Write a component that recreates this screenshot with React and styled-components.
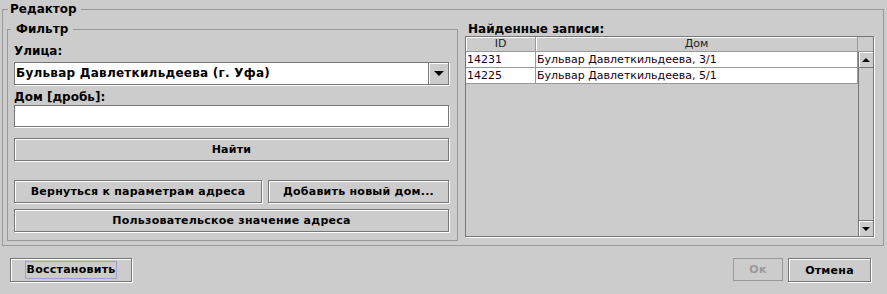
import React from 'react';
import styled, { createGlobalStyle } from 'styled-components';

const GlobalStyle = createGlobalStyle`
  html, body {
    margin: 0;
    padding: 0;
    background: #cccccc;
  }
  body {
    font-family: "DejaVu Sans", "Liberation Sans", sans-serif;
    font-size: 12px;
    color: #000;
  }
`;

const Window = styled.div`
  width: 887px;
  height: 294px;
  box-sizing: border-box;
  padding-top: 2px;
  display: flex;
  flex-direction: column;
  background: #cccccc;
`;

const Group = styled.fieldset`
  margin: 0;
  min-width: 0;
  border: 1px solid #999999;
  box-sizing: border-box;
`;

const Editor = styled(Group)`
  margin-left: 2px;
  width: 882px;
  padding: 6px 8px 4px 4px;
  display: flex;
  gap: 7px;
`;

const Filter = styled(Group)`
  width: 451px;
  height: 219px;
  padding: 0 8px 0 6px;
  display: flex;
  flex-direction: column;
`;

const Legend = styled.legend`
  font-weight: bold;
  line-height: 14px;
  height: 14px;
  padding: ${(p) => p.$pad};
  margin-left: ${(p) => p.$shift};
`;

const Label = styled.div`
  font-weight: bold;
  line-height: 14px;
  height: 14px;
  margin-top: ${(p) => p.$top || '0px'};
  margin-bottom: ${(p) => p.$bottom || '0px'};
`;

const Combo = styled.div`
  height: 23px;
  box-sizing: border-box;
  display: flex;
  border: 1px solid #777777;
  box-shadow: 1px 1px 0 #ffffff;
  background: #ffffff;
`;

const ComboText = styled.div`
  flex: 1;
  font-weight: bold;
  letter-spacing: 0.25px;
  padding-left: 1px;
  line-height: 21px;
`;

const ComboArrow = styled.div`
  width: 20px;
  box-sizing: border-box;
  background: #cccccc;
  border-left: 1px solid #777777;
  box-shadow: inset 1px 1px 0 #ffffff;
  display: flex;
  align-items: center;
  justify-content: center;
`;

const Triangle = styled.div`
  width: 0;
  height: 0;
  border-left: ${(p) => p.$size}px solid transparent;
  border-right: ${(p) => p.$size}px solid transparent;
  ${(p) => (p.$up ? 'border-bottom' : 'border-top')}: ${(p) => p.$size}px solid #000;
`;

const Field = styled.div`
  height: 22px;
  box-sizing: border-box;
  border: 1px solid #777777;
  box-shadow: 1px 1px 0 #ffffff;
  background: #ffffff;
`;

const Button = styled.button`
  height: ${(p) => p.$h || 23}px;
  width: ${(p) => (p.$w ? `${p.$w}px` : 'auto')};
  flex: ${(p) => (p.$grow ? '1' : 'none')};
  margin: 0;
  padding: 0;
  box-sizing: border-box;
  font-family: inherit;
  font-size: 11px;
  font-weight: bold;
  letter-spacing: 0.25px;
  color: ${(p) => (p.disabled ? '#999999' : '#000')};
  background: #cccccc;
  border: 1px solid ${(p) => (p.disabled ? '#999999' : '#777777')};
  box-shadow: ${(p) =>
    p.disabled ? 'none' : 'inset 1px 1px 0 #ffffff, 1px 1px 0 #ffffff'};
  margin-top: ${(p) => p.$top || '0px'};
  margin-left: ${(p) => p.$left || '0px'};
  display: flex;
  align-items: center;
  justify-content: center;
`;

const ButtonRow = styled.div`
  display: flex;
  gap: 6px;
  margin-top: ${(p) => p.$top};
`;

const Focus = styled.span`
  outline: 1px solid #a0a0d0;
  padding: 1px 1px;
  line-height: 14px;
`;

const Results = styled.div`
  flex: 1;
  display: flex;
  flex-direction: column;
  padding-bottom: 4px;
`;

const ResultsLabel = styled(Label)`
  padding-left: 3px;
`;

const Table = styled.div`
  flex: 1;
  margin-right: 1px;
  border: 1px solid #777777;
  box-shadow: 1px 1px 0 #ffffff;
  display: grid;
  grid-template-columns: 70px 322px 15px;
  grid-template-rows: 15px 1fr;
  background: #cccccc;
  font-size: 11px;
`;

const HeadCell = styled.div`
  box-sizing: border-box;
  border-right: 1px solid #999999;
  border-bottom: 1px solid #999999;
  box-shadow: inset 1px 1px 0 #ffffff;
  text-align: center;
  line-height: 14px;
  color: #222;
`;

const Corner = styled.div`
  border-bottom: 1px solid #999999;
`;

const Body = styled.div`
  grid-column: 1 / 3;
  display: flex;
  flex-direction: column;
`;

const Row = styled.div`
  display: grid;
  grid-template-columns: 70px 322px;
  height: 16px;
  box-sizing: border-box;
  background: #ffffff;
  border-bottom: 1px solid #999999;
`;

const Cell = styled.div`
  box-sizing: border-box;
  border-right: 1px solid #999999;
  padding-left: 1px;
  line-height: 15px;
  white-space: nowrap;
  color: #1a0010;
`;

const Scrollbar = styled.div`
  display: flex;
  flex-direction: column;
  justify-content: space-between;
  border-left: 1px solid #777777;
  background: #cccccc;
`;

const ScrollButton = styled.div`
  height: 16px;
  box-sizing: border-box;
  border-${(p) => (p.$top ? 'bottom' : 'top')}: 1px solid #777777;
  box-shadow: inset 1px 1px 0 #ffffff;
  display: flex;
  align-items: center;
  justify-content: center;
`;

const Footer = styled.div`
  display: flex;
  align-items: flex-start;
  padding: 12px 16px 0 10px;
`;

const Spacer = styled.div`
  flex: 1;
`;

const rows = [
  { id: '14231', house: 'Бульвар Давлеткильдеева, 3/1' },
  { id: '14225', house: 'Бульвар Давлеткильдеева, 5/1' },
];

export default function App() {
  return (
    <>
      <GlobalStyle />
      <Window>
        <Editor>
          <Legend $pad="0 4px 0 2px" $shift="1px">Редактор</Legend>
          <Filter>
            <Legend $pad="0 5px 0 5px" $shift="-3px">Фильтр</Legend>
            <Label $top="8px" $bottom="4px">Улица:</Label>
            <Combo>
              <ComboText>Бульвар Давлеткильдеева (г. Уфа)</ComboText>
              <ComboArrow>
                <Triangle $size={5} />
              </ComboArrow>
            </Combo>
            <Label $top="5px" $bottom="1px">Дом [дробь]:</Label>
            <Field />
            <Button $top="11px">Найти</Button>
            <ButtonRow $top="19px">
              <Button $w={248}>Вернуться к параметрам адреса</Button>
              <Button $grow>Добавить новый дом...</Button>
            </ButtonRow>
            <Button $top="6px">Пользовательское значение адреса</Button>
          </Filter>
          <Results>
            <ResultsLabel>Найденные записи:</ResultsLabel>
            <Table>
              <HeadCell>ID</HeadCell>
              <HeadCell>Дом</HeadCell>
              <Corner />
              <Body>
                {rows.map((r) => (
                  <Row key={r.id}>
                    <Cell>{r.id}</Cell>
                    <Cell>{r.house}</Cell>
                  </Row>
                ))}
              </Body>
              <Scrollbar>
                <ScrollButton $top>
                  <Triangle $size={4} $up />
                </ScrollButton>
                <ScrollButton>
                  <Triangle $size={4} />
                </ScrollButton>
              </Scrollbar>
            </Table>
          </Results>
        </Editor>
        <Footer>
          <Button $w={122} $h={24}>
            <Focus>Восстановить</Focus>
          </Button>
          <Spacer />
          <Button $w={50} disabled>
            Ок
          </Button>
          <Button $w={83} $h={24} $left="5px">
            Отмена
          </Button>
        </Footer>
      </Window>
    </>
  );
}
